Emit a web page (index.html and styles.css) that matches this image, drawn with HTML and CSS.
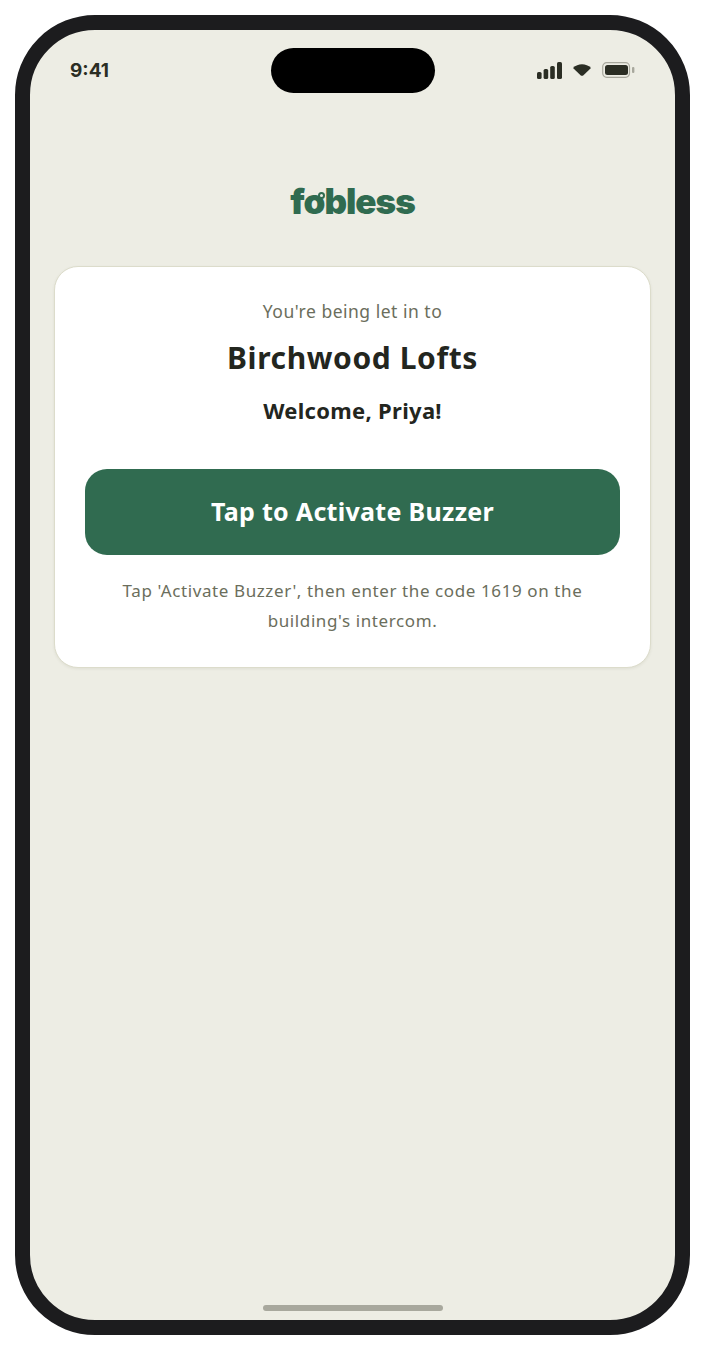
FILE: index.html
```html
<!DOCTYPE html>
<html lang="en">
<head>
  <meta charset="UTF-8">
  <title>fobless</title>
  <meta name="viewport" content="width=device-width, initial-scale=1">
  <link rel="stylesheet" href="styles.css">
</head>
<body>
  <div class="phone">
    <div class="island"></div>
    <div class="status">
      <span class="time">9:41</span>
      <div class="status-icons">
        <svg width="25" height="17" viewBox="0 0 25 17">
          <rect x="0" y="10" width="4.6" height="7" rx="1.6" fill="#2b2e24"/>
          <rect x="6.6" y="7" width="4.6" height="10" rx="1.6" fill="#2b2e24"/>
          <rect x="13.2" y="4" width="4.6" height="13" rx="1.6" fill="#2b2e24"/>
          <rect x="20" y="0" width="5" height="17" rx="1.6" fill="#2b2e24"/>
        </svg>
        <svg width="18" height="12" viewBox="0 0 18 12">
          <path d="M0 3.9 C5 -0.9 13 -0.9 18 3.9 L10.2 11.4 C9.5 12 8.5 12 7.8 11.4 Z" fill="#2b2e24"/>
        </svg>
        <svg class="battery" width="33" height="16" viewBox="0 0 33 16">
          <rect x="0.7" y="0.7" width="26.8" height="14.6" rx="4" fill="none" stroke="#a8a89d" stroke-width="1.2"/>
          <rect x="3" y="3" width="23" height="10" rx="2.5" fill="#2b2e24"/>
          <rect x="30" y="5" width="2.4" height="6" rx="1" fill="#a8a89d"/>
        </svg>
      </div>
    </div>
    <div class="logo">f<span class="fob-o">o</span>bless</div>
    <div class="card">
      <p class="lead">You're being let in to</p>
      <h1>Birchwood Lofts</h1>
      <p class="welcome">Welcome, Priya!</p>
      <button class="buzzer">Tap to Activate Buzzer</button>
      <p class="hint">Tap 'Activate Buzzer', then enter the code 1619 on the building's intercom.</p>
    </div>
    <div class="home-bar"></div>
  </div>
</body>
</html>
```
FILE: styles.css
```css
body {
  margin: 0;
  padding: 15px;
  background: #fff;
  font-family: "Noto Sans", Arial, sans-serif;
}
.phone {
  position: relative;
  box-sizing: border-box;
  width: 675px;
  height: 1320px;
  border: 15px solid #1c1c1e;
  border-radius: 80px;
  background: #edede4;
  padding: 0 24px;
  display: flex;
  flex-direction: column;
}
.island {
  position: absolute;
  top: 18px;
  left: 241px;
  width: 164px;
  height: 45px;
  border-radius: 23px;
  background: #000;
}
.status {
  display: flex;
  justify-content: space-between;
  align-items: center;
  height: 24px;
  margin-top: 28px;
  padding: 0 16px;
}
.time {
  margin-top: 1px;
  font-family: Inter, sans-serif;
  font-size: 19px;
  font-weight: 700;
  color: #2b2e24;
}
.status-icons {
  display: flex;
  align-items: center;
  gap: 11px;
}
.status-icons svg {
  display: block;
}
.logo {
  margin-top: 97px;
  text-align: center;
  font-family: Inter, sans-serif;
  font-size: 35px;
  line-height: 44px;
  font-weight: 900;
  letter-spacing: -1px;
  color: #306b50;
}
.fob-o {
  position: relative;
}
.fob-o::after {
  content: "";
  position: absolute;
  top: 12px;
  right: -1px;
  width: 3px;
  height: 3px;
  border: 2px solid #306b50;
  border-radius: 50%;
  background: #edede4;
}
.card {
  margin-top: 43px;
  padding: 29px 30px 31px;
  background: #fff;
  border: 1px solid #dcdccb;
  border-radius: 24px;
  box-shadow: 0 1px 3px rgba(60,60,30,0.08);
  text-align: center;
}
.lead {
  margin: 0;
  font-size: 17.5px;
  line-height: 30px;
  letter-spacing: 0.5px;
  color: #6b6e5c;
}
h1 {
  margin: 12px 0 0;
  font-size: 30px;
  line-height: 40px;
  font-weight: 700;
  letter-spacing: 0.6px;
  color: #23261e;
}
.welcome {
  margin: 16px 0 0;
  font-size: 22px;
  line-height: 32px;
  font-weight: 700;
  letter-spacing: 0.3px;
  color: #23261e;
}
.buzzer {
  display: block;
  width: 100%;
  height: 86px;
  margin-top: 43px;
  padding: 0 0 2px;
  border: none;
  border-radius: 22px;
  background: #306b50;
  color: #fff;
  font-family: inherit;
  font-size: 25px;
  font-weight: 700;
  letter-spacing: 0.3px;
}
.hint {
  margin: 21px 0 0;
  padding: 0 20px;
  font-size: 17px;
  line-height: 30px;
  letter-spacing: 0.6px;
  color: #6b6e5c;
}
.home-bar {
  position: absolute;
  bottom: 9px;
  left: 233px;
  width: 180px;
  height: 6px;
  border-radius: 3px;
  background: #a8a89d;
}
```
